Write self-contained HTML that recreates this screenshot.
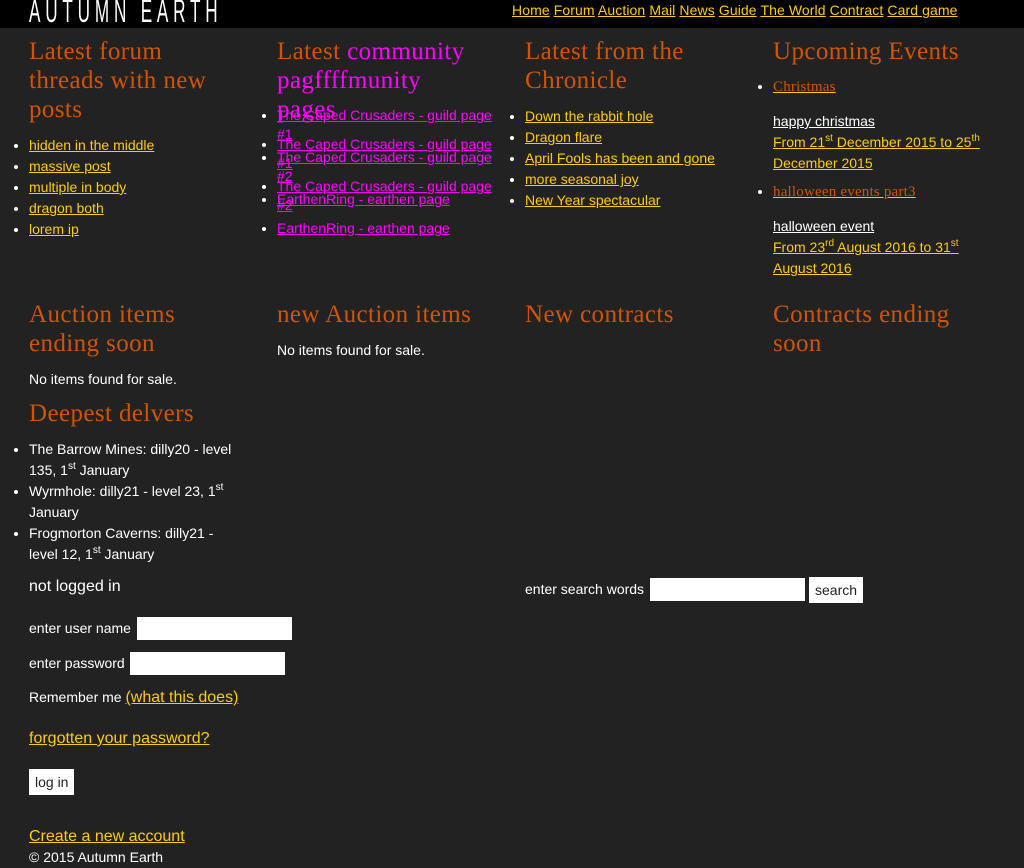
<!DOCTYPE html>
<html><head><meta charset="utf-8"><style>
*{margin:0;padding:0;box-sizing:border-box}
body{width:1024px;height:868px;background:#222;color:#fff;font-family:"Liberation Sans",sans-serif;font-size:14px;position:relative;overflow:hidden}
.hdr{position:absolute;left:0;top:0;width:1024px;height:28px;background:#000}
.logo{position:absolute;left:29px;top:-7px;font-family:"Liberation Sans Narrow","Liberation Sans",sans-serif;font-size:32px;letter-spacing:9px;color:#fff;font-weight:100;transform:scaleX(0.535);transform-origin:left top;white-space:nowrap}
.nav{position:absolute;left:512px;top:2px;font-size:14px;letter-spacing:0.1px}
a{color:#fc0;text-decoration:underline}
.a{position:absolute}
h2{position:absolute;font-family:"Liberation Serif",serif;font-weight:normal;font-size:25px;line-height:29px;color:#d35400;letter-spacing:0.4px;white-space:nowrap}
ul{position:absolute;list-style:disc;padding-left:0}
ul li{line-height:21px;margin-left:0}
ul li::marker{color:#fff}
input{position:absolute;background:#fff;border:none;height:23px}
.btn{position:absolute;background:#fff;color:#222;padding:0 6px;height:26px;line-height:26px;font-size:14px}
sup{font-size:10px;vertical-align:top;position:relative;top:-4px}
.ev{font-family:'Liberation Serif',serif;font-size:15px;letter-spacing:0.2px}
.ev a{color:#d35400;text-decoration-color:#fc0}
</style></head><body>
<div class="hdr"><div class="logo">AUTUMN EARTH</div>
<div class="nav"><a>Home</a> <a>Forum</a> <a>Auction</a> <a>Mail</a> <a>News</a> <a>Guide</a> <a>The World</a> <a>Contract</a> <a>Card game</a></div></div>

<h2 style="left:29px;top:37px">Latest forum<br>threads with new<br>posts</h2>
<ul style="left:29px;top:135px"><li><a>hidden in the middle</a></li><li><a>massive post</a></li><li><a>multiple in body</a></li><li><a>dragon both</a></li><li><a>lorem ip</a></li></ul>

<h2 style="left:277px;top:37px">Latest <span style="color:#f0f">community</span></h2>
<h2 style="left:277px;top:66px;color:#f0f">pagffffmunity</h2>
<h2 style="left:277px;top:95px;color:#f0f">pages</h2>
<ul style="left:277px;top:106px;width:230px;color:#f0f"><li style="line-height:19px"><a style="color:#f0f">The Caped Crusaders - guild page #1</a></li></ul>
<ul style="left:277px;top:135px;width:230px;color:#f0f"><li style="line-height:19px"><a style="color:#f0f">The Caped Crusaders - guild page #1</a></li></ul>
<ul style="left:277px;top:148px;width:230px;color:#f0f"><li style="line-height:19px"><a style="color:#f0f">The Caped Crusaders - guild page #2</a></li></ul>
<ul style="left:277px;top:177px;width:230px;color:#f0f"><li style="line-height:19px"><a style="color:#f0f">The Caped Crusaders - guild page #2</a></li></ul>
<ul style="left:277px;top:190px;color:#f0f"><li style="line-height:19px"><a style="color:#f0f">EarthenRing - earthen page</a></li></ul>
<ul style="left:277px;top:219px;color:#f0f"><li style="line-height:19px"><a style="color:#f0f">EarthenRing - earthen page</a></li></ul>

<h2 style="left:525px;top:37px">Latest from the<br>Chronicle</h2>
<ul style="left:525px;top:106px"><li><a>Down the rabbit hole</a></li><li><a>Dragon flare</a></li><li><a>April Fools has been and gone</a></li><li><a>more seasonal joy</a></li><li><a>New Year spectacular</a></li></ul>

<h2 style="left:773px;top:37px">Upcoming Events</h2>
<ul style="left:773px;top:77px;width:225px"><li class="ev"><a>Christmas</a></li></ul>
<div class="a" style="left:773px;top:111px;width:225px;line-height:21px"><a style="color:#fff">happy christmas</a><br><a>From 21<sup>st</sup> December 2015 to 25<sup>th</sup> December 2015</a></div>
<ul style="left:773px;top:182px;width:225px"><li class="ev"><a>halloween events part3</a></li></ul>
<div class="a" style="left:773px;top:216px;width:225px;line-height:21px"><a style="color:#fff">halloween event</a><br><a>From 23<sup>rd</sup> August 2016 to 31<sup>st</sup> August 2016</a></div>

<h2 style="left:29px;top:300px">Auction items<br>ending soon</h2>
<div class="a" style="left:29px;top:371px">No items found for sale.</div>
<h2 style="left:277px;top:300px">new Auction items</h2>
<div class="a" style="left:277px;top:342px">No items found for sale.</div>
<h2 style="left:525px;top:300px">New contracts</h2>
<h2 style="left:773px;top:300px">Contracts ending<br>soon</h2>

<h2 style="left:29px;top:399px">Deepest delvers</h2>
<ul style="left:29px;top:439px;width:215px"><li>The Barrow Mines: dilly20 - level 135, 1<sup>st</sup> January</li><li>Wyrmhole: dilly21 - level 23, 1<sup>st</sup> January</li><li>Frogmorton Caverns: dilly21 - level 12, 1<sup>st</sup> January</li></ul>

<div class="a" style="left:29px;top:578px;font-size:16px">not logged in</div>
<div class="a" style="left:29px;top:620px">enter user name</div><input style="left:137px;top:617px;width:155px">
<div class="a" style="left:29px;top:655px">enter password</div><input style="left:130px;top:652px;width:155px">
<div class="a" style="left:29px;top:689px">Remember me <a style="font-size:16px">(what this does)</a></div>
<div class="a" style="left:29px;top:730px;font-size:16px"><a>forgotten your password?</a></div>
<div class="btn" style="left:29px;top:769px">log in</div>
<div class="a" style="left:29px;top:828px;font-size:16px"><a>Create a new account</a></div>
<div class="a" style="left:29px;top:849px">© 2015 Autumn Earth</div>

<div class="a" style="left:525px;top:581px">enter search words</div><input style="left:650px;top:578px;width:155px">
<div class="btn" style="left:809px;top:577px">search</div>
</body></html>
